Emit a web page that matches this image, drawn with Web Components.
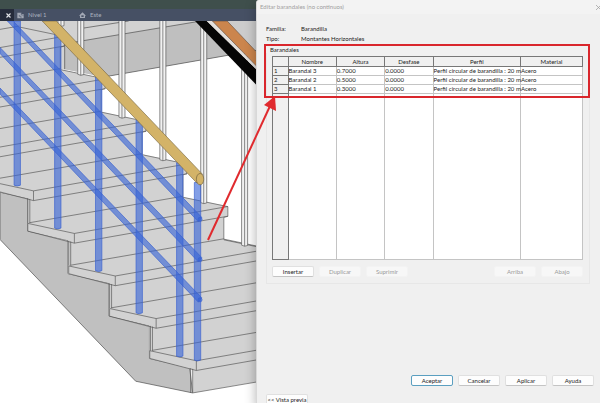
<!DOCTYPE html>
<html lang="es">
<head>
<meta charset="utf-8">
<title>Editar barandales</title>
<style>
html, body { margin: 0; height: 100%; }
body { font-family: Lato, "Open Sans", sans-serif; font-size: 6px; line-height: 8px; color: #222; }
</style>
</head>
<body>
<rail-workspace></rail-workspace>

<script>
function define(name, html, setup) {
  const tpl = document.createElement('template');
  tpl.innerHTML = html;
  customElements.define(name, class extends HTMLElement {
    constructor() {
      super();
      this.attachShadow({ mode: 'open' }).append(tpl.content.cloneNode(true));
    }
    connectedCallback() { if (setup) setup(this, this.shadowRoot); }
  });
}

define('view-tabs', `
<style>
:host { display: block; background: #465064; color: #aab0be; }
.strip { height: 9px; background: #3f4f4c; }
nav { display: flex; height: 12px; align-items: center; }
button { all: unset; display: flex; align-items: center; gap: 4px; box-sizing: border-box; height: 12px; }
.close { width: 14px; background: #262c3b; color: #e4e6ea; justify-content: flex-end; padding-right: 2px; }
.tab { width: 62px; padding-left: 3px; }
svg { width: 7px; height: 7px; flex: none; }
</style>
<div class="strip"></div>
<nav>
  <button class="close" aria-label="Cerrar"><svg viewBox="0 0 7 7"><path d="M1.5 1.5l4 4M5.5 1.5l-4 4" stroke="#e4e6ea" stroke-width="1.1"/></svg></button>
  <button class="tab"><svg viewBox="0 0 21 21"><path d="M1 2h12v4h7v13H1z" fill="#a3a9b5"/><path d="M13 1v8h7M7 9v4h5v6" fill="none" stroke="#565f72" stroke-width="2"/></svg>Nivel 1</button>
  <button class="tab"><svg viewBox="0 0 21 21"><path d="M0 11L10.500 1 21 11h-3v7H3v-7z" fill="#a3a9b5"/><path d="M7 10h7v5H7z" fill="#465064"/></svg>Este</button>
</nav>`);

define('stair-scene', `
<style>
:host { display: block; min-height: 0; background: #fff; overflow: hidden; }
svg { display: block; width: 100%; height: 100%; }
</style>
<svg viewBox="0 63 768 1146" preserveAspectRatio="xMinYMin slice" role="img" aria-label="Escalera">
  <g stroke="#4a4a4a" stroke-width="2" stroke-linejoin="round">
    <path d="M0 63H768V150L310 230 193 207H0z" fill="#d2d2d2" stroke="none"/>
    <path d="M193 131L600 63H768V150L310 230 193 207z" fill="#bfbfbf" stroke="none"/>
    <path d="M650 63H768V150L735 155z" fill="#cccccc" stroke="none"/>
    <path d="M193 131L600 63M250 84L384 63M193 131V207M310 230L768 150" fill="none"/>
    <path d="M0 574L83 592V690L203 717V817L325 845V943L446 972V1070L566 1098 575 1173 405 1138 0 715z" fill="#c0c0c0"/>
    <path d="M0 100L180 70V207L314 236V264H302V334L436 363V391H424V461L558 489V518H546V588L680 616V645L668 648V714L768 735V1140L575 1173V1103L446 1070V972L325 943V845L203 817V717L83 690V592L0 574z" fill="#d2d2d2" stroke="none"/>
  </g>
  <g id="lines" fill="none" stroke="#555" stroke-width="2"></g>
  <g id="back" fill="#f1f1f1" stroke="#555" stroke-width="2"></g>
  <path d="M582 63H617L768 210V257z" fill="#050505"/>
  <path d="M617 63H634L768 200V210z" fill="#e3e0dd"/>
  <path d="M634 63H678L768 158V200z" fill="#cb854d" stroke="#6a5546" stroke-width="2"/>
  <g id="posts" fill="#3764d6" fill-opacity=".62" stroke="#3a62cf" stroke-width="2"></g>
  <g fill="#3764d6" fill-opacity=".62" stroke="#3a62cf" stroke-width="2">
    <path d="M22 63H39L602 649 592 662z"/><path d="M0 142L602 769 592 782 0 160z"/><path d="M0 263L602 889 592 902 0 281z"/>
    <circle cx="597" cy="655" r="6"/><circle cx="597" cy="775" r="6"/><circle cx="597" cy="895" r="6"/>
  </g>
  <path d="M126 63H168L604 520 587 546z" fill="#d3b368" stroke="#7d6b42" stroke-width="2"/>
  <ellipse cx="597" cy="535" rx="11" ry="17" fill="#d3b368" stroke="#6f603e" stroke-width="2"/>
</svg>`, (host, root) => {
  let d = '';
  for (let k = -4; k < 5; k++) {
    const x = 100 + 122 * k - (k === 4 ? 2 : 0), y = 570 + 127 * k - (k === 4 ? 1 : 0);
    const run = Math.min(458, 768 - x), rise = run * 0.1755;
    d += `M${x} ${y + 29}V${y}l${run} ${-rise}M${x} ${y + 29}l${run} ${-rise}`;
    if (k < 4) {
      const back = Math.min(458, 780 - x);
      d += `M${x - 12} ${y + 95}l${back} ${-back * 0.1725}`;
    }
    if (k < 2) d += `M${x + 446} ${y + 19}l134 28v29l-12 3v66`;
    d += `M${x - 139} ${y - 30}V${y - 7}L${x} ${y + 29}M${x - 139} ${y - 30}L${x} ${y}`;
    if (k >= 0) d += `M${x - 17} ${y + 22}v74M${x - 11} ${y + 24}v72`;
  }
  d += 'M668 714L768 735M575 1173L768 1140';
  root.querySelector('#lines').innerHTML = `<path d="${d}"/>`;
  root.querySelector('#back').innerHTML = [[173, 63, 76], [232, 63, 222], [355, 63, 350], [477, 63, 477], [599, 63, 605], [721, 155, 732]]
    .map(([x, a, b]) => `<path d="M${x} ${a}V${b}l9 3 9-2V${a}M${x + 9} ${a}V${b + 3}"/>`).join('');
  root.querySelector('#posts').innerHTML = [[42, 63, 555], [163, 102, 683], [285, 230, 810], [406, 358, 936], [527, 486, 1065], [580, 545, 1077]]
    .map(([x, a, b]) => `<path d="M${x} ${a}V${b - 2}q9 5 19 0V${a}z"/>`).join('');
});

define('dialog-button', `
<style>
:host { display: block; width: 42px; }
button { box-sizing: border-box; width: 100%; height: 11px; padding: 0; border: 1px solid #e0e0e0; border-bottom-color: #c4c4c4; border-radius: 2px; background: #fdfdfd; font: inherit; line-height: 8px; color: #222; white-space: nowrap; }
button:disabled { border-color: #f3f3f3; background: #f7f7f7; color: #9b9b9b; }
:host([primary]) button { border-color: #5b9fc0; }
</style>
<button><slot></slot></button>`, (host, root) => {
  root.querySelector('button').disabled = host.hasAttribute('disabled');
});

define('rail-table', `
<style>
:host { display: block; }
table { width: 100%; height: 204px; table-layout: fixed; border-collapse: collapse; background: #fff; color: #222; }
th, td { box-sizing: border-box; height: 9px; padding: 0; border: 1px solid #c4c4c4; line-height: 8px; font-weight: 400; text-align: left; white-space: nowrap; }
thead th { height: 10px; text-align: center; background: #f0f0f0; border-color: #777; }
tbody th { background: #f0f0f0; border-color: #777; padding-left: 1px; }
tr.rest > * { height: auto; }
</style>
<table>
<colgroup><col style="width:5%"><col style="width:15.6%"><col style="width:15.6%"><col style="width:15.6%"><col style="width:28.2%"><col style="width:20%"></colgroup>
<thead><tr><th></th><th>Nombre</th><th>Altura</th><th>Desfase</th><th>Perfil</th><th>Material</th></tr></thead>
<tbody></tbody>
</table>`, (host, root) => {
  const rows = [['Barandal 3', '0.7000'], ['Barandal 2', '0.5000'], ['Barandal 1', '0.3000']];
  root.querySelector('tbody').innerHTML = rows.map(([n, h], i) =>
    `<tr><th>${i + 1}</th><td>${n}</td><td>${h}</td><td>0.0000</td><td>Perfil circular de barandilla : 20 m</td><td>Acero</td></tr>`).join('') +
    '<tr class="rest"><th></th><td></td><td></td><td></td><td></td><td></td></tr>';
});

define('callout-mark', `
<style>
:host { position: absolute; inset: -2px 0 auto -2px; height: 54px; box-sizing: border-box; border: 2px solid #d9262c; pointer-events: none; }
svg { position: absolute; left: -60px; top: 47px; width: 80px; height: 150px; }
</style>
<svg viewBox="0 0 80 150"><path d="M2 147L64 13" stroke="#e02a2e" stroke-width="2"/><path d="M69 3L58 12 70 18z" fill="#e02a2e"/></svg>`);

define('rail-dialog', `
<style>
:host { display: flex; flex-direction: column; position: relative; background: #f0f0f0; border-left: 1px solid #d8d8d8; border-top-left-radius: 3px; box-shadow: 0 4px 12px rgba(0,0,0,.3); }
header { display: flex; justify-content: space-between; align-items: center; height: 14px; padding-left: 3px; background: #f3f3f3; color: #a0a0a0; border-top-left-radius: 3px; }
header button { all: unset; width: 5px; height: 7px; }
header svg { display: block; width: 7px; height: 7px; }
dl { display: grid; grid-template-columns: 35px 1fr; row-gap: 2px; margin: 11px 0 0 9px; }
dt, dd { margin: 0; }
section { position: relative; margin: 3px 10px 0 9px; }
h2 { margin: 0; padding: 0 4px; font: inherit; }
.group { padding: 3px 6px 6px 5px; border: 1px solid #e7e7e7; border-top: 0; margin-top: -1px; }
.row { display: flex; gap: 5px; }
.edit { padding-top: 6px; }
.gap { flex: 1; }
.actions { justify-content: flex-end; padding: 91px 6px 0 0; }
.preview { padding: 8px 0 0 9px; }
</style>
<header><span>Editar barandales (no continuos)</span><button aria-label="Cerrar"><svg viewBox="0 0 7 7"><path d="M1 1l5 5M6 1l-5 5" stroke="#999" stroke-width=".7"/></svg></button></header>
<dl><dt>Familia:</dt><dd>Barandilla</dd><dt>Tipo:</dt><dd>Montantes Horizontales</dd></dl>
<section>
  <h2>Barandales</h2>
  <div class="group">
    <rail-table></rail-table>
    <div class="row edit"><dialog-button>Insertar</dialog-button><dialog-button disabled>Duplicar</dialog-button><dialog-button disabled>Suprimir</dialog-button><span class="gap"></span><dialog-button disabled>Arriba</dialog-button><dialog-button disabled>Abajo</dialog-button></div>
  </div>
  <callout-mark></callout-mark>
</section>
<div class="row actions"><dialog-button primary>Aceptar</dialog-button><dialog-button>Cancelar</dialog-button><dialog-button>Aplicar</dialog-button><dialog-button>Ayuda</dialog-button></div>
<div class="row preview"><dialog-button>&lt;&lt; Vista previa</dialog-button></div>`);

define('rail-workspace', `
<style>
:host { display: grid; grid-template-columns: minmax(256px, 3fr) minmax(344px, 4fr); height: 100vh; overflow: hidden; background: linear-gradient(#3f4f4c 9px, #465064 9px 21px, #fff 21px); }
.view { display: grid; grid-template-rows: auto 1fr; min-height: 0; }
</style>
<div class="view"><view-tabs></view-tabs><stair-scene></stair-scene></div>
<rail-dialog></rail-dialog>`);
</script>
</body>
</html>
